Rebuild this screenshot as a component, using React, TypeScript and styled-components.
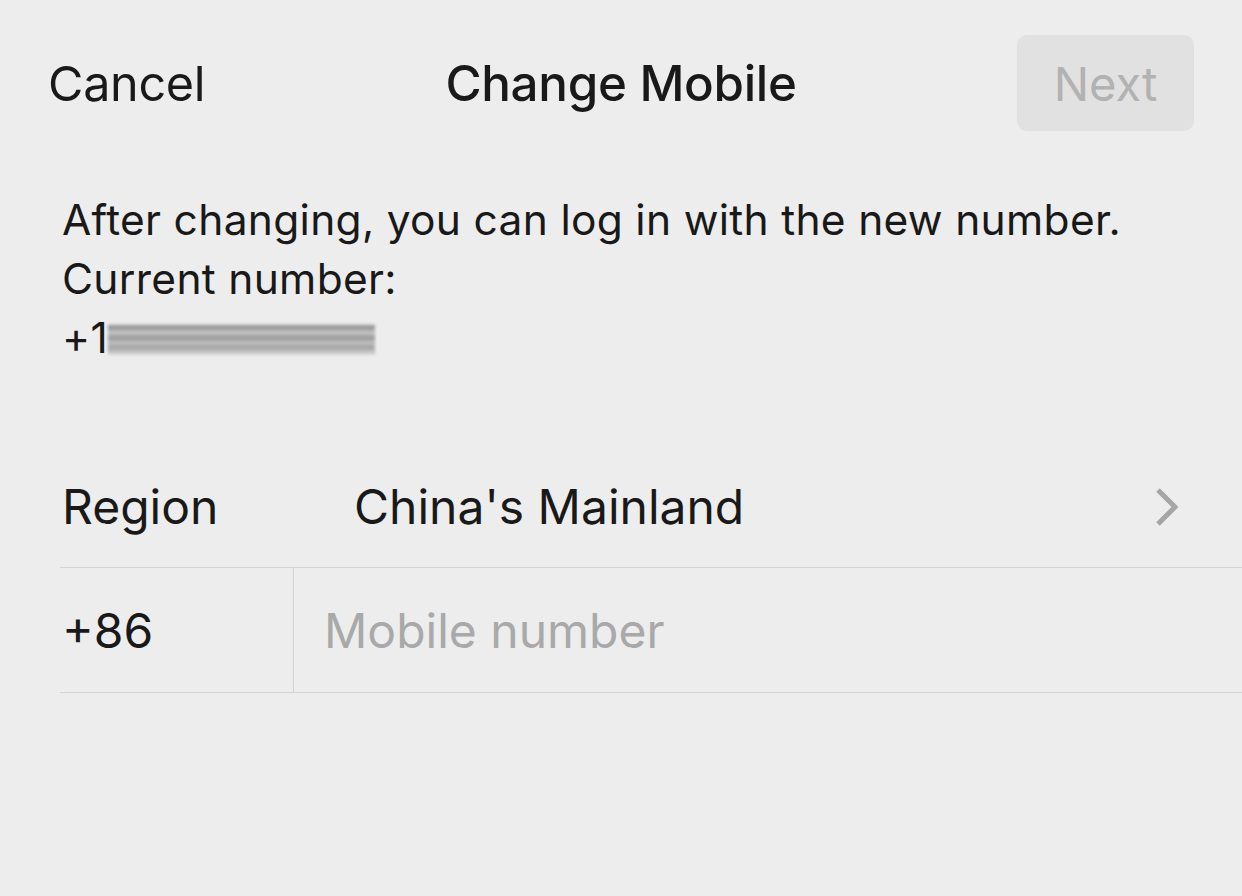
import React from 'react';
import styled, { createGlobalStyle } from 'styled-components';

const GlobalStyle = createGlobalStyle`
  html, body {
    margin: 0;
    padding: 0;
    background: #ededed;
  }
  body {
    font-family: Inter, "Liberation Sans", sans-serif;
    color: #191919;
  }
`;

const Page = styled.div`
  width: 1242px;
  height: 896px;
  background: #ededed;
  overflow: hidden;
`;

const Header = styled.div`
  display: grid;
  grid-template-columns: 1fr auto 1fr;
  align-items: center;
  padding: 35px 48px 0 48px;
  height: 96px;
`;

const HeaderText = styled.div<{ bold?: boolean }>`
  font-size: ${p => (p.bold ? 49.3 : 48.5)}px;
  font-weight: ${p => (p.bold ? 500 : 400)};
  letter-spacing: -0.3px;
  color: #191919;
`;

const NextButton = styled.div`
  justify-self: end;
  width: 177px;
  height: 96px;
  border-radius: 10px;
  background: #e1e1e1;
  color: #b2b2b2;
  font-size: 47px;
  display: flex;
  align-items: center;
  justify-content: center;
`;

const Intro = styled.div`
  padding: 59px 62px 0;
  font-size: 42.5px;
  line-height: 59px;
  letter-spacing: 0.3px;
`;

const NumberLine = styled.div`
  display: flex;
  align-items: center;
`;

const Blur = styled.div`
  width: 267px;
  height: 31px;
  margin-top: 4px;
  background: linear-gradient(180deg, #cfcfcf 0%, #858585 10%, #c4c4c4 28%, #8e8e8e 45%, #bdbdbd 60%, #9a9a9a 75%, #d8d8d8 100%);
  filter: blur(1.5px);
  opacity: 0.9;
`;

const Form = styled.div`
  margin: 79px 0 0 60px;
`;

const Row = styled.div<{ divided?: boolean }>`
  display: flex;
  align-items: stretch;
  height: ${p => (p.divided ? 125 : 122)}px;
  border-bottom: 1.5px solid #d3d3d3;
  box-sizing: border-box;
`;

const Label = styled.div<{ w: number; border?: boolean }>`
  width: ${p => p.w}px;
  padding-left: 2px;
  box-sizing: border-box;
  display: flex;
  align-items: center;
  font-size: 48px;
  color: #191919;
  border-right: ${p => (p.border ? '1.5px solid #d3d3d3' : 'none')};
`;

const Value = styled.div`
  flex: 1;
  display: flex;
  align-items: center;
  font-size: 48px;
  color: #191919;
`;

const Placeholder = styled.div`
  flex: 1;
  display: flex;
  align-items: center;
  padding-left: 30px;
  font-size: 48px;
  color: #a9a9a9;
`;

const Chevron = styled.svg`
  width: 26px;
  height: 40px;
  margin-right: 62px;
  align-self: center;
`;

export default function App() {
  return (
    <Page>
      <GlobalStyle />
      <Header>
        <HeaderText>Cancel</HeaderText>
        <HeaderText bold>Change Mobile</HeaderText>
        <NextButton>Next</NextButton>
      </Header>
      <Intro>
        <div>After changing, you can log in with the new number.</div>
        <div>Current number:</div>
        <NumberLine>
          <span>+1</span>
          <Blur />
        </NumberLine>
      </Intro>
      <Form>
        <Row>
          <Label w={294}>Region</Label>
          <Value>China's Mainland</Value>
          <Chevron viewBox="0 0 26 40">
            <path d="M4 3 L21 20 L4 37" fill="none" stroke="#a6a6a6" strokeWidth="5" />
          </Chevron>
        </Row>
        <Row divided>
          <Label w={234} border>+86</Label>
          <Placeholder>Mobile number</Placeholder>
        </Row>
      </Form>
    </Page>
  );
}
